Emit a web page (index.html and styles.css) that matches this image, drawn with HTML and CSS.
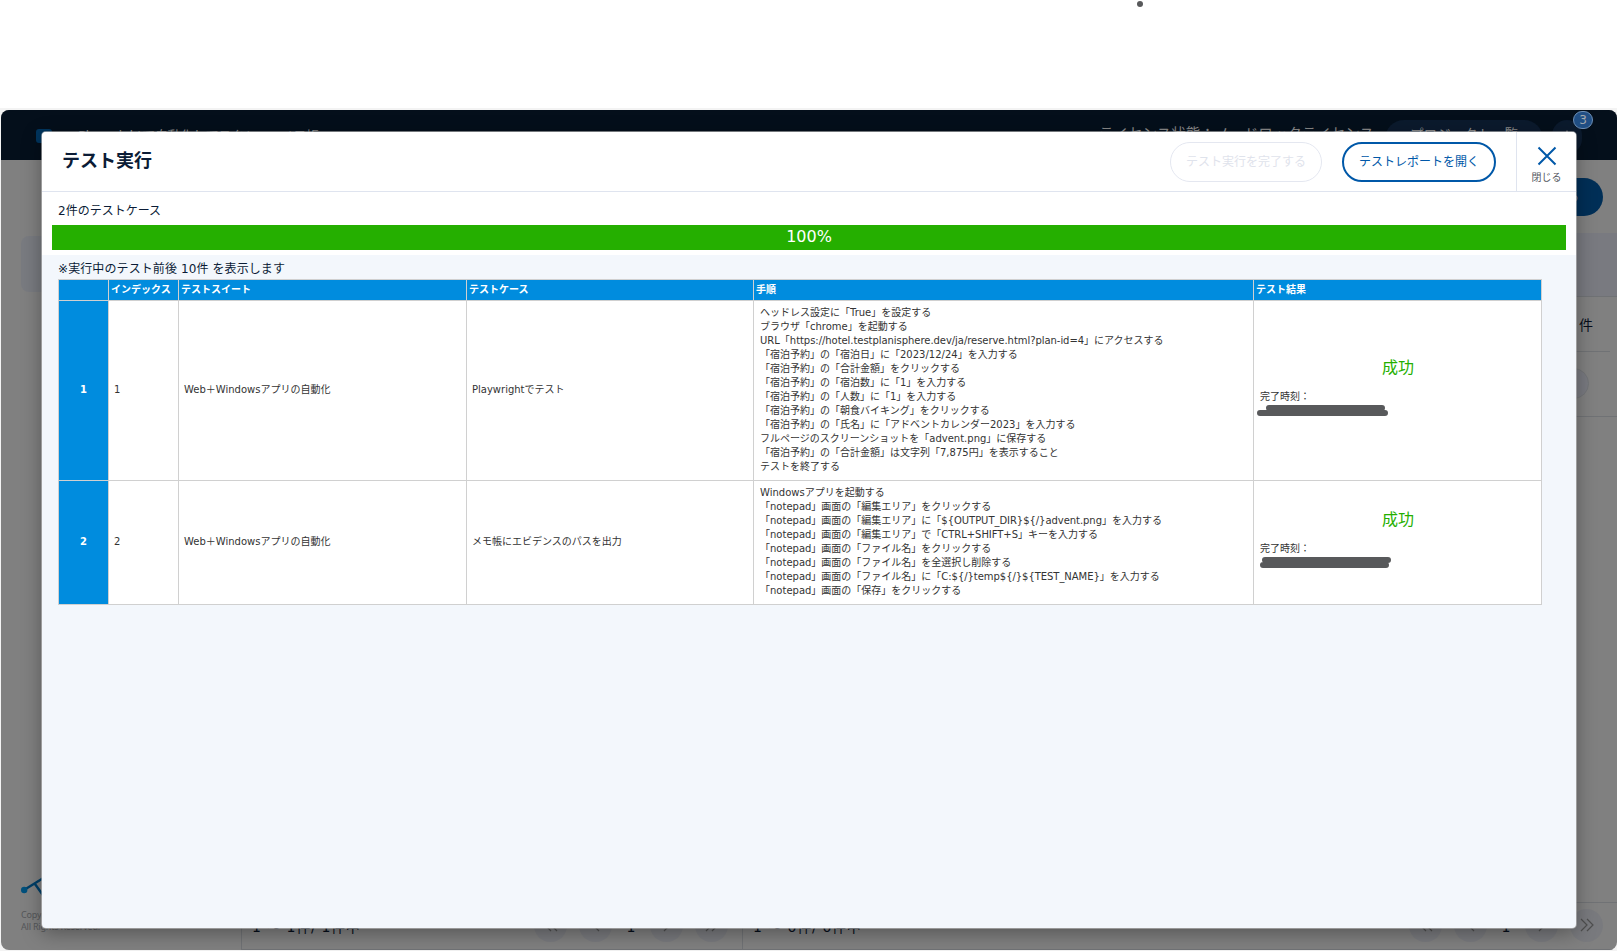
FILE: index.html
```
<!DOCTYPE html>
<html lang="ja">
<head>
    <meta charset="UTF-8">
    <title>テスト実行</title>
    <link rel="stylesheet" href="styles.css">
</head>
<body>
    <span class="dot"></span>
    <div class="window">
        <header class="app-header">
            <span class="app-logo"></span>
            <span class="app-name">Playwrightで自動化してスクショ→メモ帳</span>
            <span class="license">ライセンス状態：ノードロックライセンス</span>
            <span class="project-btn">プロジェクト一覧</span>
            <span class="bell">
                <svg width="12" height="16" viewBox="0 0 12 16"><path d="M6 1 L11 11 H1 Z" fill="#8a8a8a"/></svg>
                <span class="badge">3</span>
            </span>
        </header>
        <div class="app-body">
            <aside class="side">
                <div class="side-card"></div>
                <div class="side-foot">
                    <svg width="50" height="30" viewBox="0 0 50 30"><path d="M3 19 L24 6 M14 13 L24 27" stroke="#003f68" stroke-width="2.4" fill="none"/><circle cx="3.2" cy="19" r="3.2" fill="#00507c"/></svg>
                    <p>Copyright (c) SHIFT<br>All Rights Reserved.</p>
                </div>
            </aside>
            <main class="main">
                <div class="toolbar"><span class="run-btn">実行する</span></div>
                <div class="tabs"></div>
                <div class="count">0 件</div>
                <div class="filter"><span class="circle"></span></div>
                <div class="panes">
                    <div class="pager pager-left">
                        <span class="range">1 ～ 1件/ 1件中</span>
                        <span class="page-btn"><svg width="14" height="14" viewBox="0 0 14 14"><path d="M7 1L1 7l6 6M13 1L7 7l6 6"/></svg></span>
                        <span class="page-btn"><svg width="14" height="14" viewBox="0 0 14 14"><path d="M10 1L4 7l6 6"/></svg></span>
                        <span class="page-num">1</span>
                        <span class="page-btn"><svg width="14" height="14" viewBox="0 0 14 14"><path d="M4 1l6 6-6 6"/></svg></span>
                        <span class="page-btn"><svg width="14" height="14" viewBox="0 0 14 14"><path d="M1 1l6 6-6 6M7 1l6 6-6 6"/></svg></span>
                    </div>
                    <div class="pager pager-right">
                        <span class="range">1 ～ 0件/ 0件中</span>
                        <span class="page-btn"><svg width="14" height="14" viewBox="0 0 14 14"><path d="M7 1L1 7l6 6M13 1L7 7l6 6"/></svg></span>
                        <span class="page-btn"><svg width="14" height="14" viewBox="0 0 14 14"><path d="M10 1L4 7l6 6"/></svg></span>
                        <span class="page-num">1</span>
                        <span class="page-btn"><svg width="14" height="14" viewBox="0 0 14 14"><path d="M4 1l6 6-6 6"/></svg></span>
                        <span class="page-btn"><svg width="14" height="14" viewBox="0 0 14 14"><path d="M1 1l6 6-6 6M7 1l6 6-6 6"/></svg></span>
                    </div>
                </div>
            </main>
        </div>
    </div>

    <div class="modal">
        <div class="modal-header">
            <h1>テスト実行</h1>
            <button class="btn btn-disabled" disabled>テスト実行を完了する</button>
            <button class="btn">テストレポートを開く</button>
            <div class="close">
                <svg width="20" height="20" viewBox="0 0 20 20"><path d="M1.5 1.5l17 17M18.5 1.5l-17 17" stroke="#0058a8" stroke-width="2"/></svg>
                <span>閉じる</span>
            </div>
        </div>
        <div class="progress">
            <p>2件のテストケース</p>
            <div class="bar">100%</div>
        </div>
        <div class="content">
            <p class="note">※実行中のテスト前後 10件 を表示します</p>
            <table>
                <colgroup><col class="c-no"><col class="c-index"><col class="c-suite"><col class="c-case"><col class="c-steps"><col class="c-result"></colgroup>
                <tr class="head">
                    <th></th><th>インデックス</th><th>テストスイート</th><th>テストケース</th><th>手順</th><th>テスト結果</th>
                </tr>
                <tr class="row1">
                    <td class="no">1</td>
                    <td>1</td>
                    <td>Web＋Windowsアプリの自動化</td>
                    <td>Playwrightでテスト</td>
                    <td class="steps">
                        ヘッドレス設定に「True」を設定する<br>
                        ブラウザ「chrome」を起動する<br>
                        URL「<span class="en">https://hotel.testplanisphere.dev/ja/reserve.html?plan-id=4</span>」にアクセスする<br>
                        「宿泊予約」の「宿泊日」に「2023/12/24」を入力する<br>
                        「宿泊予約」の「合計金額」をクリックする<br>
                        「宿泊予約」の「宿泊数」に「1」を入力する<br>
                        「宿泊予約」の「人数」に「1」を入力する<br>
                        「宿泊予約」の「朝食バイキング」をクリックする<br>
                        「宿泊予約」の「氏名」に「アドベントカレンダー2023」を入力する<br>
                        フルページのスクリーンショットを「advent.png」に保存する<br>
                        「宿泊予約」の「合計金額」は文字列「7,875円」を表示すること<br>
                        テストを終了する
                    </td>
                    <td class="result">
                        <div class="success">成功</div>
                        <div>完了時刻：</div>
                        <svg class="mask" width="132" height="12" viewBox="0 0 132 12"><path d="M12 3H125M3 8H128" /></svg>
                    </td>
                </tr>
                <tr class="row2">
                    <td class="no">2</td>
                    <td>2</td>
                    <td>Web＋Windowsアプリの自動化</td>
                    <td>メモ帳にエビデンスのパスを出力</td>
                    <td class="steps">
                        Windowsアプリを起動する<br>
                        「notepad」画面の「編集エリア」をクリックする<br>
                        「notepad」画面の「編集エリア」に「<span class="en">${OUTPUT_DIR}${/}advent.png</span>」を入力する<br>
                        「notepad」画面の「編集エリア」で「<span class="en">CTRL+SHIFT+S</span>」キーを入力する<br>
                        「notepad」画面の「ファイル名」をクリックする<br>
                        「notepad」画面の「ファイル名」を全選択し削除する<br>
                        「notepad」画面の「ファイル名」に「<span class="en">C:${/}temp${/}${TEST_NAME}</span>」を入力する<br>
                        「notepad」画面の「保存」をクリックする
                    </td>
                    <td class="result">
                        <div class="success">成功</div>
                        <div>完了時刻：</div>
                        <svg class="mask" width="136" height="12" viewBox="0 0 136 12"><path d="M8 3H131M6 8H129" /></svg>
                    </td>
                </tr>
            </table>
        </div>
    </div>
</body>
</html>
```

FILE: styles.css
```
* {
    box-sizing: border-box;
}

body {
    margin: 0;
    height: 951px;
    overflow: hidden;
    position: relative;
    padding: 110px 0 0 1px;
    background: linear-gradient(#fff 108px, #f3f3f3 108px);
    font-family: "DejaVu Sans", "Noto Sans CJK JP", sans-serif;
    color: #0b1c36;
    text-spacing-trim: space-all;
}

p {
    margin: 0;
}

.dot {
    position: absolute;
    left: 1137px;
    top: 1px;
    width: 6px;
    height: 6px;
    border-radius: 50%;
    background: #58595b;
}

/* dimmed application */
.window {
    height: 840px;
    display: flex;
    flex-direction: column;
    border-radius: 8px;
    overflow: hidden;
    background: #808080;
}

.app-header {
    height: 50px;
    flex: none;
    display: flex;
    align-items: flex-start;
    background: #040f1b;
    color: #8a8a8a;
    font-size: 13.5px;
    line-height: 20px;
    white-space: nowrap;
}

.app-logo {
    width: 16px;
    height: 14px;
    margin: 19px 26px 0 35px;
    border-radius: 3px;
    background: #00355e;
}

.app-name {
    margin-top: 16px;
    letter-spacing: -0.7px;
}

.license {
    margin: 14px 11px 0 auto;
    font-size: 14.5px;
}

.project-btn {
    width: 158px;
    height: 38px;
    padding-top: 4px;
    margin: 10px 9px 0 0;
    border-radius: 19px;
    background: #0b1a2d;
    text-align: center;
}

.bell {
    position: relative;
    width: 30px;
    height: 34px;
    margin: 10px 35px 0 0;
    padding: 9px 9px;
    border-radius: 15px;
    background: #0b1a2d;
}

.badge {
    position: absolute;
    left: 21px;
    top: -9px;
    width: 20px;
    height: 18px;
    border: 1px solid #6d8fb6;
    border-radius: 9px;
    background: #214f85;
    color: #a3a8ae;
    font-size: 12px;
    line-height: 16px;
    text-align: center;
}

.app-body {
    flex: 1;
    display: flex;
}

.side {
    width: 240px;
    padding: 76px 20px 0;
    display: flex;
    flex-direction: column;
    justify-content: space-between;
}

.side-card {
    height: 56px;
    border-radius: 8px;
    background: #797b80;
}

.side-foot {
    height: 79px;
    font-size: 9px;
    line-height: 12px;
    letter-spacing: -0.2px;
    color: #55575a;
    font-family: "Noto Sans", sans-serif;
}

.side-foot svg {
    display: block;
    margin-bottom: 8px;
}

.main {
    flex: 1;
    display: flex;
    flex-direction: column;
}

.toolbar {
    height: 73px;
    padding: 18px 14px;
    display: flex;
    justify-content: flex-end;
}

.run-btn {
    width: 120px;
    height: 38px;
    border-radius: 19px;
    background: #002f57;
    color: #808890;
    font-size: 12px;
    line-height: 38px;
    text-align: right;
    padding-right: 24px;
}

.tabs {
    height: 64px;
    border-bottom: 1px solid #707275;
    background: #797a80;
}

.count {
    height: 55px;
    margin-right: 7px;
    padding-right: 17px;
    border-bottom: 1px solid #707275;
    font-size: 14px;
    line-height: 56px;
    text-align: right;
    color: #060e1b;
}

.filter {
    height: 65px;
    padding: 16px 28px;
    border-bottom: 1px solid #707275;
    display: flex;
    justify-content: flex-end;
}

.circle {
    width: 31px;
    height: 31px;
    border: 1px solid #737578;
    border-radius: 50%;
    background: #797a80;
}

.panes {
    flex: 1;
    display: flex;
    align-items: flex-end;
}

.pager {
    height: 48px;
    display: flex;
    align-items: center;
    gap: 12px;
    border: 1px solid #707275;
    border-right: 0;
    font-size: 14px;
    color: #060e1b;
}

.pager-left {
    width: 501px;
    padding: 0 14px 2px 10px;
}

.pager-right {
    flex: 1;
    padding: 0 14px 2px 10px;
}

.range {
    margin-right: auto;
    padding-top: 2px;
    white-space: pre;
    letter-spacing: 0.7px;
}

.page-btn {
    width: 33px;
    height: 33px;
    border-radius: 50%;
    background: #797a7e;
    display: flex;
    align-items: center;
    justify-content: center;
}

.page-btn svg {
    fill: none;
    stroke: #4f4f4f;
    stroke-width: 1.2;
}

.page-num {
    width: 14px;
    padding-top: 3px;
    text-align: center;
}

/* test run dialog */
.modal {
    position: absolute;
    left: 42px;
    top: 132px;
    width: 1534px;
    height: 796px;
    display: flex;
    flex-direction: column;
    border-radius: 4px;
    overflow: hidden;
    background: #f3f7fc;
    box-shadow: 0 0 0 1px rgba(190, 190, 190, 0.6), 0 5px 20px rgba(0, 0, 0, 0.35);
}

.modal-header {
    height: 60px;
    display: flex;
    align-items: center;
    padding-left: 20px;
    background: #fff;
    border-bottom: 1px solid #dfe4ef;
}

h1 {
    margin: 0 auto 1px 0;
    font-size: 18px;
    line-height: 24px;
}

.btn {
    width: 154px;
    height: 40px;
    margin-right: 20px;
    padding: 0 0 2px;
    border: 2px solid #0058a8;
    border-radius: 20px;
    background: #fff;
    color: #0058a8;
    font-family: inherit;
    font-size: 12px;
    white-space: nowrap;
}

.btn-disabled {
    width: 152px;
    border: 1px solid #e4e7f0;
    color: #dfe3ec;
}

.close {
    width: 60px;
    height: 60px;
    padding-top: 14px;
    border-left: 1px solid #dfe4ef;
    display: flex;
    flex-direction: column;
    align-items: center;
    gap: 5px;
    color: #55585f;
    font-size: 10px;
    line-height: 14px;
}

.progress {
    height: 63px;
    padding: 10px 10px 0;
    background: #fff;
    font-size: 12px;
}

.progress p {
    padding-left: 6px;
    line-height: 18px;
    height: 23px;
}

.bar {
    height: 25px;
    background: #25af00;
    color: #fff;
    font-size: 16px;
    line-height: 23px;
    text-align: center;
}

.content {
    padding: 3px 16px;
}

.note {
    font-size: 12px;
    line-height: 22px;
    height: 21px;
    letter-spacing: 0.1px;
}

table {
    width: 1483px;
    table-layout: fixed;
    border-collapse: collapse;
    background: #fff;
    color: #333;
    font-size: 10px;
    line-height: 14px;
}

.c-no { width: 50px; }
.c-index { width: 70px; }
.c-suite { width: 288px; }
.c-case { width: 287px; }
.c-steps { width: 500px; }
.c-result { width: 288px; }

th, td {
    border: 1px solid #d0d0d0;
    text-align: left;
}

th {
    padding: 0 2px;
    background: #008cde;
    color: #fff;
    white-space: nowrap;
}

td {
    padding: 0 5px 2px;
}

.head { height: 21px; }
.row1 { height: 180px; }
.row2 { height: 124px; }

.no {
    background: #008cde;
    color: #fff;
    font-weight: bold;
    text-align: center;
}

.steps {
    padding-left: 6px;
}

.en {
    letter-spacing: -0.05px;
}

.result {
    padding: 0 5px 8px 6px;
}

.success {
    color: #25af00;
    font-size: 16px;
    line-height: 24px;
    margin-bottom: 10px;
    text-align: center;
}

.mask {
    display: block;
    margin-left: -3px;
    margin-top: 1px;
    fill: none;
    stroke: #58595b;
    stroke-width: 6;
    stroke-linecap: round;
}
```
